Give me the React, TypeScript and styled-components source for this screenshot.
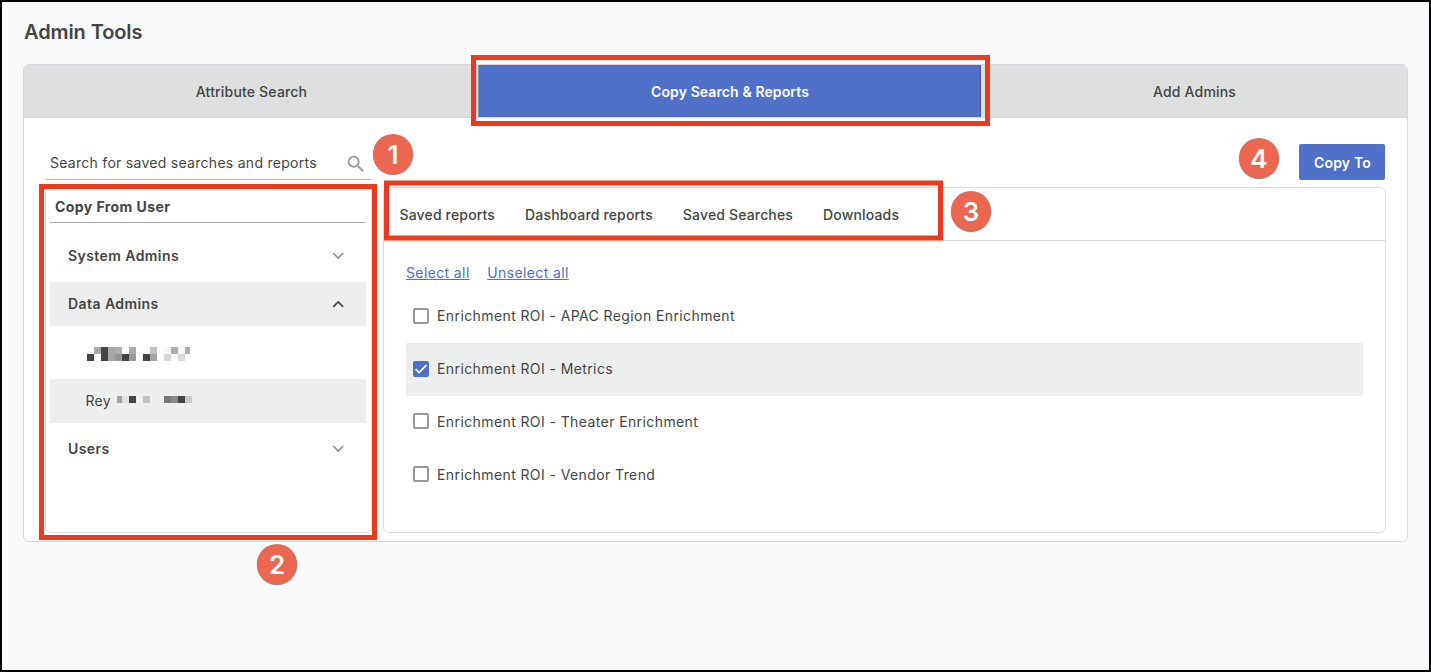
import React from "react";
import styled, { createGlobalStyle, css } from "styled-components";
import { MdSearch } from "react-icons/md";

const ink = "#434544";
const blue = "#5170ca";
const red = "#ed391d";

const GlobalStyle = createGlobalStyle`
  *, *::before, *::after { box-sizing: border-box; }
  body { margin: 0; background: #f9fafc; font-family: Inter, "Liberation Sans", sans-serif; color: ${ink}; }
  button { font: inherit; color: inherit; background: none; border: 0; padding: 0; }
`;

const Page = styled.div`
  position: relative;
  width: 1431px;
  height: 672px;
  padding: 16px 21px 0;
  border: 2px solid #000;
  background: #f9fafc;
  overflow: hidden;
`;

const Title = styled.h1`
  margin: 0 0 18px 1px;
  height: 28px;
  line-height: 28px;
  font-size: 20px;
  font-weight: 600;
  letter-spacing: -0.1px;
`;

const Card = styled.section`
  width: 1385px;
  height: 478px;
  border: 1px solid #d6d8de;
  border-radius: 6px;
  background: #fff;
  overflow: hidden;
`;

const TabBar = styled.nav`
  display: grid;
  grid-template-columns: 454px 503px 1fr;
  height: 53px;
  border-bottom: 1px solid #d9dbdc;
  background: #dee0df;
`;

const Tab = styled.button<{ $active?: boolean }>`
  height: 52px;
  padding: 1px 0 0 1px;
  font-size: 14px;
  font-weight: 500;
  letter-spacing: 0.18px;
  ${(p) =>
    p.$active &&
    css`
      padding-left: 1px;
      background: ${blue};
      color: #fff;
      font-weight: 600;
      letter-spacing: 0.1px;
      border-left: 1px solid #8c929f;
      border-right: 1px solid #4059a6;
    `}
`;

const Toolbar = styled.div`
  display: flex;
  justify-content: space-between;
  align-items: flex-end;
  height: 62px;
  padding: 0 22px 0 22px;
`;

const SearchField = styled.label`
  display: flex;
  align-items: center;
  justify-content: space-between;
  width: 325px;
  height: 34px;
  padding: 0 4px 0 4px;
  border-bottom: 1px solid #b3b4b8;
  font-size: 14px;
  letter-spacing: 0.28px;
  svg { color: #979998; margin-top: 2px; }
`;

const CopyButton = styled.button`
  width: 86px;
  height: 36px;
  padding-left: 1px;
  border-radius: 2px;
  background: ${blue};
  color: #fff;
  font-size: 14px;
  font-weight: 600;
  letter-spacing: 0.2px;
`;

const Columns = styled.div`
  display: grid;
  grid-template-columns: 327px 1003px;
  column-gap: 11px;
  height: 346px;
  margin: 7px 0 0 21px;
`;

const Panel = styled.div`
  border: 1px solid #d9dadd;
  border-radius: 6px;
  background: #fff;
`;

const UserPanel = styled(Panel)`
  padding: 0 5px 0 4px;
`;

const PanelHeading = styled.h2`
  margin: 0 0 11px;
  height: 35px;
  padding-left: 5px;
  border-bottom: 1px solid #afafb7;
  font-size: 14px;
  font-weight: 700;
  line-height: 38px;
  letter-spacing: 0.43px;
`;

/* Row captions sit slightly above the centre line of their icons */
const Caption = styled.span`
  margin-bottom: 2px;
`;

const GroupRow = styled.button<{ $open?: boolean }>`
  display: flex;
  align-items: center;
  justify-content: space-between;
  width: 316px;
  height: 44px;
  margin-bottom: 4px;
  padding: 0 22px 0 18px;
  font-size: 14px;
  font-weight: 600;
  letter-spacing: 0.43px;
  background: ${(p) => (p.$open ? "#edefee" : "transparent")};
  svg { color: ${(p) => (p.$open ? ink : "#8f9190")}; }
`;

const UserRow = styled.div<{ $selected?: boolean }>`
  display: flex;
  align-items: center;
  gap: 6px;
  height: 44px;
  padding-left: ${(p) => (p.$selected ? "35.5px" : "37px")};
  margin-bottom: ${(p) => (p.$selected ? "4px" : "3px")};
  margin-top: ${(p) => (p.$selected ? "0" : "6px")};
  font-size: 14px;
  letter-spacing: 0.3px;
  background: ${(p) => (p.$selected ? "#edefee" : "transparent")};
`;

const Mosaic = styled.svg<{ $raise?: boolean }>`
  display: block;
  margin-bottom: ${(p) => (p.$raise ? "3px" : "0")};
`;

const ReportTabs = styled.nav`
  display: flex;
  align-items: center;
  gap: 30px;
  height: 53px;
  padding: 1px 0 0 15.5px;
  border-bottom: 1px solid #d9dadd;
`;

const ReportTab = styled.button`
  font-size: 14px;
  font-weight: 500;
  letter-spacing: 0.16px;
`;

const ReportBody = styled.div`
  padding: 22px 22px 0;
`;

const LinkRow = styled.div`
  display: flex;
  gap: 17.6px;
  height: 27px;
`;

const TextLink = styled.a`
  height: 20px;
  line-height: 20px;
  font-size: 14px;
  letter-spacing: 0.38px;
  color: ${blue};
  text-decoration: underline;
`;

const CheckBox = styled.span<{ $checked?: boolean }>`
  display: grid;
  place-items: center;
  width: 16px;
  height: 16px;
  margin-bottom: 1px;
  border: 2px solid #979998;
  border-width: ${(p) => (p.$checked ? "0" : "2px")};
  border-radius: 2px;
  background: ${(p) => (p.$checked ? blue : "#fff")};
`;

const ReportRow = styled.label<{ $checked?: boolean }>`
  display: flex;
  align-items: center;
  gap: 8px;
  height: 53px;
  padding-left: 7px;
  font-size: 14px;
  letter-spacing: 0.4px;
  background: ${(p) => (p.$checked ? "#edefee" : "transparent")};
  &:nth-child(n + 4) ${CheckBox} { margin-bottom: 3px; }
`;

/* Call-out overlays that sit on top of the page */
const Highlight = styled.div<{ $x: number; $y: number; $w: number; $h: number; $thin?: boolean }>`
  position: absolute;
  left: ${(p) => p.$x - 2}px;
  top: ${(p) => p.$y - 2}px;
  width: ${(p) => p.$w}px;
  height: ${(p) => p.$h}px;
  border: 5px solid ${red};
  ${(p) =>
    p.$thin &&
    css`
      border-top-width: 4px;
      border-bottom-width: 4px;
      box-shadow: 0 -1px #f0988a, 0 1px #f0988a, inset 0 1px #f0a092, inset 0 -1px #f0a092;
    `}
`;

const Badge = styled.div<{ $x: number; $y: number }>`
  position: absolute;
  left: ${(p) => p.$x - 2}px;
  top: ${(p) => p.$y - 2}px;
  width: 40px;
  height: 40px;
  border-radius: 50%;
  background: #ec6750;
  box-shadow: 0 1px 1px rgba(60, 60, 60, 0.65);
  color: #fff;
  font: 600 26px/41px Inter, sans-serif;
  text-align: center;
`;

const Chevron = ({ up }: { up?: boolean }) => (
  <svg width="12" height="8" viewBox="0 0 12 8" fill="none" stroke="currentColor" strokeWidth="1.7">
    <path d={up ? "M1.2 6.9 6.2 2 11.2 6.9" : "M1.2 1 6.2 6 11.2 1"} />
  </svg>
);

type Cell = [number, number, number, string];
const maskedName: Cell[] = [
  [0, 7, 7, "#444645"], [7, 0, 7, "#a9abaa"], [14, 0, 7, "#444645"], [14, 7, 7, "#444645"],
  [21, 0, 7, "#a6a6a7"], [28, 0, 7, "#adadad"], [21, 7, 7, "#a6a6a7"], [28, 7, 7, "#969897"],
  [35, 7, 7, "#444645"], [42, 0, 7, "#abadac"], [42, 7, 7, "#9b9b9c"],
  [56, 0, 7, "#fcfcfc"], [56, 7, 7, "#444645"], [63, 0, 7, "#c0c1c0"], [63, 7, 7, "#a3a5a4"],
  [77, 0, 7, "#f6f6f6"], [77, 7, 7, "#d7d8d7"], [84, 0, 7, "#abadac"],
  [91, 0, 7, "#f6f6f6"], [91, 7, 7, "#d7d8d7"], [98, 0, 5, "#abadac"],
];
const maskedSurname: Cell[] = [
  [0, 0, 5, "#a1a3a2"], [5, 0, 7, "#e0e2e1"], [12, 0, 7, "#444645"], [26, 0, 7, "#c1c3c2"],
  [47, 0, 7, "#767877"], [54, 0, 7, "#868887"], [61, 0, 7, "#444645"], [68, 0, 7, "#c6c8c7"],
];

const Masked = ({ cells, w, h, raise }: { cells: Cell[]; w: number; h: number; raise?: boolean }) => (
  <Mosaic width={w} height={h} shapeRendering="crispEdges" $raise={raise}>
    {cells.map(([x, y, cw, fill]) => (
      <rect key={`${x}-${y}`} x={x} y={y} width={cw} height={7} fill={fill} />
    ))}
  </Mosaic>
);

const reports = [
  { name: "Enrichment ROI - APAC Region Enrichment" },
  { name: "Enrichment ROI - Metrics", checked: true },
  { name: "Enrichment ROI - Theater Enrichment" },
  { name: "Enrichment ROI - Vendor Trend" },
];

export default function App() {
  return (
    <>
      <GlobalStyle />
      <Page>
        <Title>Admin Tools</Title>
        <Card>
          <TabBar>
            <Tab>Attribute Search</Tab>
            <Tab $active>Copy Search &amp; Reports</Tab>
            <Tab>Add Admins</Tab>
          </TabBar>
          <Toolbar>
            <SearchField>
              Search for saved searches and reports
              <MdSearch size={22} />
            </SearchField>
            <CopyButton>Copy To</CopyButton>
          </Toolbar>
          <Columns>
            <UserPanel>
              <PanelHeading>Copy From User</PanelHeading>
              <GroupRow><Caption>System Admins</Caption><Chevron /></GroupRow>
              <GroupRow $open><Caption>Data Admins</Caption><Chevron up /></GroupRow>
              <UserRow><Masked cells={maskedName} w={103} h={14} /></UserRow>
              <UserRow $selected><Caption>Rey</Caption><Masked cells={maskedSurname} w={75} h={7} raise /></UserRow>
              <GroupRow><Caption>Users</Caption><Chevron /></GroupRow>
            </UserPanel>
            <Panel>
              <ReportTabs>
                <ReportTab>Saved reports</ReportTab>
                <ReportTab>Dashboard reports</ReportTab>
                <ReportTab>Saved Searches</ReportTab>
                <ReportTab>Downloads</ReportTab>
              </ReportTabs>
              <ReportBody>
                <LinkRow>
                  <TextLink>Select all</TextLink>
                  <TextLink>Unselect all</TextLink>
                </LinkRow>
                {reports.map((r) => (
                  <ReportRow key={r.name} $checked={r.checked}>
                    <CheckBox $checked={r.checked}>
                      {r.checked && (
                        <svg width="16" height="16" viewBox="0 0 16 16" fill="none" stroke="#fff" strokeWidth="1.7">
                          <path d="M2.6 8.2 6 11.6 13.6 4" />
                        </svg>
                      )}
                    </CheckBox>
                    <Caption>{r.name}</Caption>
                  </ReportRow>
                ))}
              </ReportBody>
            </Panel>
          </Columns>
        </Card>

        <Highlight $x={471} $y={55} $w={519} $h={71} />
        <Highlight $x={39} $y={184} $w={338} $h={356} />
        <Highlight $x={384} $y={181} $w={559} $h={59} $thin />
        <Badge $x={373} $y={134}>1</Badge>
        <Badge $x={257} $y={544}>2</Badge>
        <Badge $x={951} $y={191}>3</Badge>
        <Badge $x={1239} $y={138}>4</Badge>
      </Page>
    </>
  );
}
